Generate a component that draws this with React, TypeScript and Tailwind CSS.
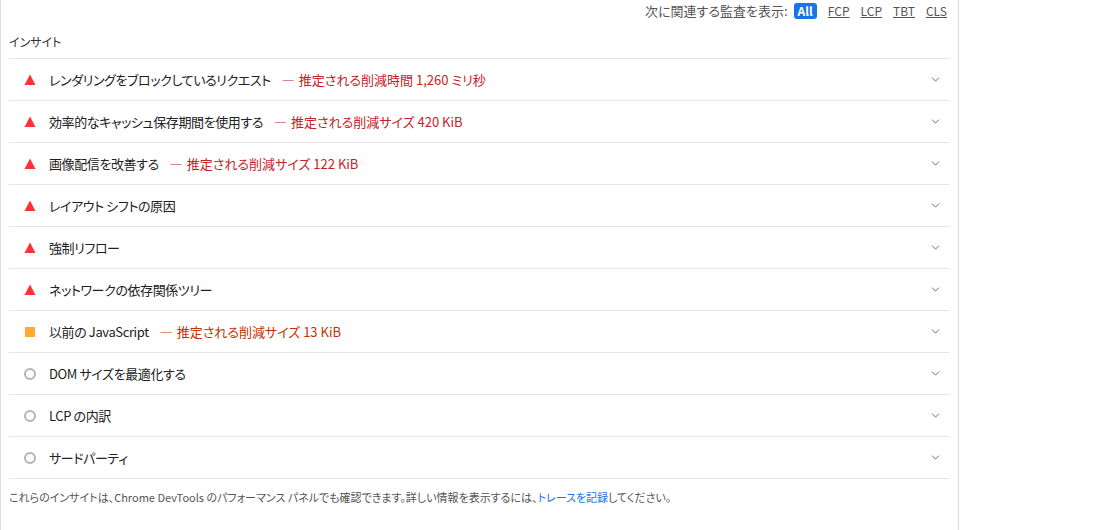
import { ChevronDown } from 'lucide-react'

type Level = 'fail' | 'average' | 'info'

interface IInsight {
  title: string
  level: Level
  savings?: string
}

const insights: IInsight[] = [
  { title: 'レンダリングをブロックしているリクエスト', level: 'fail', savings: '推定される削減時間 1,260 ミリ秒' },
  { title: '効率的なキャッシュ保存期間を使用する', level: 'fail', savings: '推定される削減サイズ 420 KiB' },
  { title: '画像配信を改善する', level: 'fail', savings: '推定される削減サイズ 122 KiB' },
  { title: 'レイアウト シフトの原因', level: 'fail' },
  { title: '強制リフロー', level: 'fail' },
  { title: 'ネットワークの依存関係ツリー', level: 'fail' },
  { title: '以前の JavaScript', level: 'average', savings: '推定される削減サイズ 13 KiB' },
  { title: 'DOM サイズを最適化する', level: 'info' },
  { title: 'LCP の内訳', level: 'info' },
  { title: 'サードパーティ', level: 'info' },
]

const filters = ['FCP', 'LCP', 'TBT', 'CLS']

const StatusIcon = ({ level }: { level: Level }) => {
  if (level === 'fail') {
    return (
      <svg width="12" height="12" viewBox="0 0 12 12" className="shrink-0">
        <polygon points="6,0.5 11.5,11 0.5,11" fill="#ff3333" />
      </svg>
    )
  }
  if (level === 'average') {
    return <span className="block w-[10px] h-[10px] bg-[#ffaa33] shrink-0 mx-[1px]" />
  }
  return <span className="block w-[12px] h-[12px] rounded-full border-2 border-[#b3b3b3] shrink-0" />
}

export default function App() {
  return (
    <div
      className="w-[959px] h-[530px] border-x border-[#dcdcdc] bg-white [font-feature-settings:'palt']"
      style={{ fontFamily: '"Noto Sans CJK JP", "Noto Sans", sans-serif' }}
    >
      <div className="px-[8px]">
        {/* filter header */}
        <div className="flex items-center justify-end h-[22px] pr-[3px] text-[13px] text-[#555]">
          <span className="mr-[6px]">次に関連する監査を表示:</span>
          <span className="px-[4px] h-[16px] leading-[16px] rounded-[3px] bg-[#1a73e8] text-white font-bold text-[12px]">
            All
          </span>
          {filters.map((f) => (
            <span key={f} className="underline text-[12px] text-[#555] ml-[11px]">
              {f}
            </span>
          ))}
        </div>

        <div className="h-[36px] flex items-center pt-[4px] text-[12px] text-[#333]">インサイト</div>

        <div className="border-b border-[#e6e6e6]">
          {insights.map((item) => (
            <div
              key={item.title}
              className="h-[42px] border-t border-[#e6e6e6] flex items-center pl-[15px] pr-[8px]"
            >
              <StatusIcon level={item.level} />
              <span className="ml-[13px] text-[13px] text-[#212121] tracking-[-0.4px]">{item.title}</span>
              {item.savings && (
                <span
                  className={
                    'ml-[11px] text-[13px] ' +
                    (item.level === 'fail' ? 'text-[#c5221f]' : 'text-[#c33300]')
                  }
                >
                  <span className="[font-feature-settings:normal] mr-[4px]">―</span>
                  {item.savings}
                </span>
              )}
              <ChevronDown className="ml-auto w-[13px] h-[13px] text-[#666]" strokeWidth={1.75} />
            </div>
          ))}
        </div>

        <p className="mt-[10px] text-[11px] text-[#555]">
          これらのインサイトは、Chrome DevTools のパフォーマンス パネルでも確認できます。詳しい情報を表示するには、
          <span className="text-[#1a73e8]">トレースを記録</span>
          してください。
        </p>
      </div>
    </div>
  )
}
